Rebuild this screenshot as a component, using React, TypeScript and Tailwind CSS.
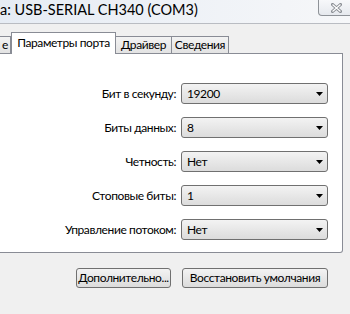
import React from 'react';

const rows = [
  { label: 'Бит в секунду:', value: '19200' },
  { label: 'Биты данных:', value: '8' },
  { label: 'Четность:', value: 'Нет' },
  { label: 'Стоповые биты:', value: '1' },
  { label: 'Управление потоком:', value: 'Нет' },
];

const Combo: React.FC<{ value: string }> = ({ value }) => (
  <div className="w-[147px] h-[21px] flex items-center justify-between pl-[5px] pr-[4px] border border-[#707070] rounded-[3px] bg-gradient-to-b from-[#f3f3f3] to-[#dcdcdc]">
    <span>{value}</span>
    <svg width="7" height="4" viewBox="0 0 7 4">
      <path d="M0 0h7L3.5 4z" fill="#000" />
    </svg>
  </div>
);

const App: React.FC = () => {
  return (
    <div
      className="w-[350px] h-[314px] bg-[#f0f0f0] overflow-hidden relative text-[12px] tracking-[-0.4px] text-black whitespace-nowrap"
      style={{ fontFamily: 'Lato, "Open Sans", sans-serif' }}
    >
      {/* title bar */}
      <div className="h-[24px] flex items-center bg-gradient-to-r from-[#e6ecf4] to-[#f6f7f9] border-b border-[#b9bcc2]">
        <span className="text-[14.5px] tracking-normal leading-none pb-[2px]">а: USB-SERIAL CH340 (COM3)</span>
      </div>
      <div className="absolute top-0 left-[318px] w-[40px] h-[16px] border border-t-0 border-[#8e9298] rounded-bl-[4px] bg-gradient-to-b from-[#f7f8fa] to-[#e6e9ee] flex items-center pl-[12px]">
        <svg width="11" height="10" viewBox="0 0 11 10">
          <path d="M1.5 1.5l8 7M9.5 1.5l-8 7" stroke="#8a8e94" strokeWidth="3" strokeLinecap="square" />
          <path d="M1.5 1.5l8 7M9.5 1.5l-8 7" stroke="#ffffff" strokeWidth="1.2" />
        </svg>
      </div>

      {/* tabs */}
      <div className="h-[29px] flex items-end relative">
        <div className="h-[17px] w-[11px] border border-b-0 border-l-0 border-[#898c95] bg-gradient-to-b from-[#f3f3f3] to-[#e3e3e3] flex items-center justify-end pr-[2px] leading-none">е</div>
        <div className="h-[22px] w-[105px] border border-b-0 border-[#898c95] bg-white flex items-center justify-center leading-none relative top-[1px] z-10 pb-[2px]">Параметры порта</div>
        <div className="h-[17px] w-[56px] border border-b-0 border-l-0 border-[#898c95] bg-gradient-to-b from-[#f3f3f3] to-[#e3e3e3] flex items-center justify-center leading-none">Драйвер</div>
        <div className="h-[17px] w-[57px] border border-b-0 border-l-0 border-[#898c95] bg-gradient-to-b from-[#f3f3f3] to-[#e3e3e3] flex items-center justify-center leading-none">Сведения</div>
      </div>

      {/* panel */}
      <div className="w-[343px] h-[200px] bg-white border border-l-0 border-[#898c95] rounded-br-[3px] pt-[29px] flex flex-col gap-[13px]">
        {rows.map((r) => (
          <div key={r.label} className="flex items-center justify-end pr-[14px] gap-[5px]">
            <span>{r.label}</span>
            <Combo value={r.value} />
          </div>
        ))}
      </div>

      {/* buttons */}
      <div className="flex justify-end gap-[11px] pr-[22px] pt-[15px]">
        <div className="h-[20px] w-[95px] border border-[#707070] rounded-[3px] bg-gradient-to-b from-[#f3f3f3] to-[#dcdcdc] flex items-center justify-center">Дополнительно...</div>
        <div className="h-[20px] w-[146px] border border-[#707070] rounded-[3px] bg-gradient-to-b from-[#f3f3f3] to-[#dcdcdc] flex items-center justify-center">Восстановить умолчания</div>
      </div>
    </div>
  );
};

export default App;
